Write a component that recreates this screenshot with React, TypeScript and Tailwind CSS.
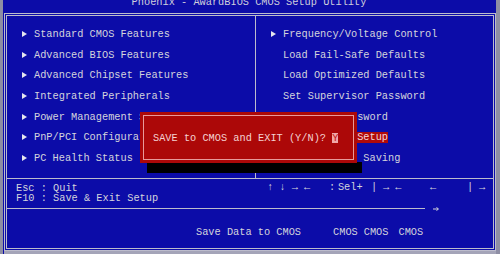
import React from 'react';

const leftItems = [
  'Standard CMOS Features',
  'Advanced BIOS Features',
  'Advanced Chipset Features',
  'Integrated Peripherals',
  'Power Management Setup',
  'PnP/PCI Configurations',
  'PC Health Status',
];

const rightItems: { label: string; arrow?: boolean; active?: boolean }[] = [
  { label: 'Frequency/Voltage Control', arrow: true },
  { label: 'Load Fail-Safe Defaults' },
  { label: 'Load Optimized Defaults' },
  { label: 'Set Supervisor Password' },
  { label: 'Set User Password' },
  { label: 'Save & Exit Setup', active: true },
  { label: 'Exit Without Saving' },
];

function Tri() {
  return (
    <svg width="5" height="6" viewBox="0 0 5 6" className="flex-none">
      <polygon points="0,0 5,3 0,6" fill="#e6e6ee" />
    </svg>
  );
}

function MenuRow({ label, arrow, active }: { label: string; arrow?: boolean; active?: boolean }) {
  return (
    <div className="flex h-[20.6px] items-center">
      <div className="w-[12px] flex-none">{arrow && <Tri />}</div>
      <span className={active ? 'bg-[#b00a0a] leading-[11px] text-[#f4d6d6]' : ''}>{label}</span>
    </div>
  );
}

export default function App() {
  return (
    <div className="relative flex h-[254px] w-[500px] overflow-hidden bg-[#0c0ca8] font-['Liberation_Mono','DejaVu_Sans_Mono',monospace] text-[10.3px] leading-[12px] whitespace-pre text-[#d4d4dc]">
      <div className="w-[3px] flex-none bg-[#8e8ea4]" />

      <div className="flex flex-1 flex-col pl-[1px]">
        {/* title */}
        <div className="h-[13px] text-center">
          <div className="-mt-[4px] pr-[2px] text-[#cfcfdc]">Phoenix - AwardBIOS CMOS Setup Utility</div>
        </div>

        {/* frame */}
        <div className="flex h-[238px] flex-col border-[3px] border-double border-[#bcbccc]">
          {/* menu */}
          <div className="flex h-[163px] border-b border-[#bcbccc]">
            <div className="w-[249px] flex-none border-r border-[#bcbccc] pl-[15px] pt-[8px]">
              {leftItems.map((it) => (
                <MenuRow key={it} label={it} arrow />
              ))}
            </div>
            <div className="flex-1 pl-[15px] pt-[8px]">
              {rightItems.map((it) => (
                <MenuRow key={it.label} {...it} />
              ))}
            </div>
          </div>

          {/* help */}
          <div className="flex h-[29px] pt-[4px] leading-[10px]">
            <div className="w-[249px] flex-none pl-[9px]">
              <div>Esc : Quit</div>
              <div>F10 : Save &amp; Exit Setup</div>
            </div>
            <div className="-mt-[1px] flex pl-[11px]">
              <span>{'↑ ↓ → ←'}</span>
              <span className="ml-[18.7px]">:</span>
              <span className="ml-[2.8px]">Sel+</span>
              <span className="ml-[8.3px]">|</span>
              <span className="ml-[5.8px]">{'→ ←'}</span>
              <span className="ml-[28.5px]">←</span>
              <span className="ml-[30.8px]">|</span>
              <span className="ml-[5.8px]">→</span>
            </div>
          </div>

          {/* divider with stray arrow */}
          <div className="flex h-px items-center">
            <div className="h-px w-[418px] flex-none bg-[#bcbccc]" />
            <svg width="6" height="4" viewBox="0 0 6 4" className="ml-[8px] flex-none">
              <path d="M0 2H5M3.5 0.5L5.5 2L3.5 3.5" stroke="#d4d4dc" strokeWidth="1" fill="none" />
            </svg>
          </div>

          {/* status */}
          <div className="flex flex-1 pl-[189px] pt-[17px]">
            <span>Save Data to CMOS</span>
            <span className="ml-[32px]">CMOS</span>
            <span className="ml-[6px]">CMOS</span>
            <span className="ml-[10px]">CMOS</span>
          </div>
        </div>
        <div className="flex-1 bg-[#a4a4b8]" />
      </div>

      <div className="w-[4px] flex-none bg-[#8e8ea4]" />

      {/* dialog shadow */}
      <div className="absolute left-[147px] top-[162px] h-[11px] w-[215px] bg-black" />

      {/* dialog */}
      <div className="absolute left-[140px] top-[112px] h-[51px] w-[217px] bg-[#ac0808] p-[3px]">
        <div className="flex h-full items-center border border-[#e89a9a] pl-[9px] text-[#f4d2d2]">
          <span>SAVE to CMOS and EXIT (Y/N)? </span>
          <span className="bg-[#f0a8a8] leading-[10px] text-[#c01010]">Y</span>
        </div>
      </div>
    </div>
  );
}
